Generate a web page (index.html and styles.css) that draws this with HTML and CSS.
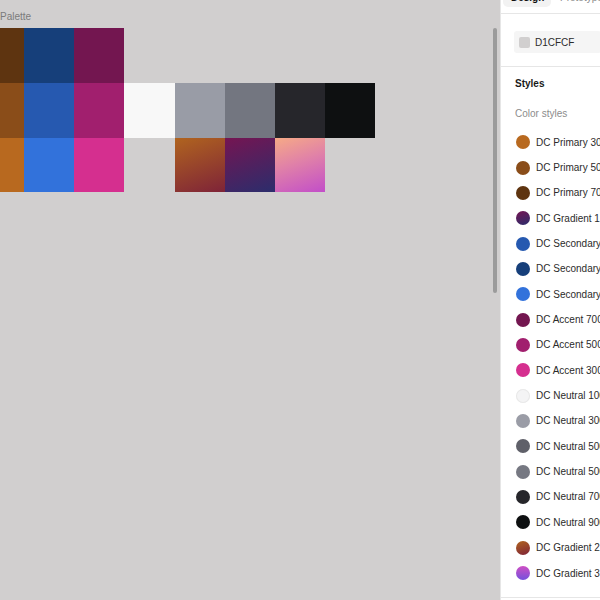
FILE: index.html
```html
<!DOCTYPE html>
<html lang="en">
<head>
  <meta charset="UTF-8">
  <title>Palette</title>
  <link rel="stylesheet" href="styles.css">
</head>
<body>
  <div class="app">
    <main class="canvas">
      <div class="frame-label">Palette</div>
      <div class="palette">
        <div class="swatch" style="background:#5e3410"></div>
        <div class="swatch" style="background:#163f7a"></div>
        <div class="swatch" style="background:#731650"></div>
        <div class="swatch empty"></div>
        <div class="swatch empty"></div>
        <div class="swatch empty"></div>
        <div class="swatch empty"></div>
        <div class="swatch empty"></div>

        <div class="swatch" style="background:#8a4d19"></div>
        <div class="swatch" style="background:#2659b0"></div>
        <div class="swatch" style="background:#a11f6e"></div>
        <div class="swatch" style="background:#f8f8f8"></div>
        <div class="swatch" style="background:#999ca6"></div>
        <div class="swatch" style="background:#737680"></div>
        <div class="swatch" style="background:#26262b"></div>
        <div class="swatch" style="background:#0e1011"></div>

        <div class="swatch" style="background:#b8691f"></div>
        <div class="swatch" style="background:#3272db"></div>
        <div class="swatch" style="background:#d52f8f"></div>
        <div class="swatch empty"></div>
        <div class="swatch grad-2"></div>
        <div class="swatch grad-1"></div>
        <div class="swatch grad-3"></div>
        <div class="swatch empty"></div>
      </div>
      <div class="scrollbar"></div>
    </main>

    <aside class="panel">
      <div class="tabs">
        <span class="tab active">Design</span>
        <span class="tab">Prototype</span>
      </div>

      <section class="section page-section">
        <div class="section-label">Page</div>
        <div class="color-input">
          <span class="color-chip"></span>
          <span>D1CFCF</span>
        </div>
      </section>

      <section class="section styles-section">
        <div class="section-title">Styles</div>
        <div class="group-label">Color styles</div>
        <ul class="style-list">
          <li><span class="dot" style="background:#b8691f"></span>DC Primary 300</li>
          <li><span class="dot" style="background:#8a4d19"></span>DC Primary 500</li>
          <li><span class="dot" style="background:#5e3410"></span>DC Primary 700</li>
          <li><span class="dot grad-1"></span>DC Gradient 1</li>
          <li><span class="dot" style="background:#2659b0"></span>DC Secondary 500</li>
          <li><span class="dot" style="background:#163f7a"></span>DC Secondary 700</li>
          <li><span class="dot" style="background:#3272db"></span>DC Secondary 300</li>
          <li><span class="dot" style="background:#731650"></span>DC Accent 700</li>
          <li><span class="dot" style="background:#a11f6e"></span>DC Accent 500</li>
          <li><span class="dot" style="background:#d52f8f"></span>DC Accent 300</li>
          <li><span class="dot light" style="background:#f4f4f5"></span>DC Neutral 100</li>
          <li><span class="dot" style="background:#9a9ca6"></span>DC Neutral 300</li>
          <li><span class="dot" style="background:#5f6069"></span>DC Neutral 500</li>
          <li><span class="dot" style="background:#767882"></span>DC Neutral 500</li>
          <li><span class="dot" style="background:#26262b"></span>DC Neutral 700</li>
          <li><span class="dot" style="background:#0e1011"></span>DC Neutral 900</li>
          <li><span class="dot grad-2"></span>DC Gradient 2</li>
          <li><span class="dot grad-4"></span>DC Gradient 3</li>
        </ul>
      </section>
    </aside>
  </div>
</body>
</html>
```

FILE: styles.css
```css
:root {
  --canvas-bg: #d1cfcf;
  --panel-border: #e6e6e6;
  --text-color: #2b2b2b;
  --muted-color: #8c8c8c;
}

body {
  margin: 0;
  font-family: "Liberation Sans", Arial, sans-serif;
  font-size: 10px;
  color: var(--text-color);
  background: var(--canvas-bg);
  overflow: hidden;
}

.app {
  display: flex;
  width: 600px;
  height: 600px;
}

/* Canvas */
.canvas {
  position: relative;
  width: 500px;
  flex-shrink: 0;
  overflow: hidden;
}

.frame-label {
  margin-top: 10px;
  line-height: 13px;
  color: #7b7b7b;
}

.palette {
  display: grid;
  grid-template-columns: repeat(3, 50px) 51px repeat(4, 50px);
  grid-template-rows: 55px 55px 54px;
  margin-top: 5px;
  margin-left: -26px;
}

.swatch.empty {
  background: transparent;
}

.grad-1 {
  background: linear-gradient(160deg, #751552 0%, #2b2d6c 100%);
}

.grad-2 {
  background: linear-gradient(160deg, #b0641f 0%, #7e2338 100%);
}

.grad-3 {
  background: linear-gradient(160deg, #f6aa86 0%, #e081a8 45%, #c24ec9 100%);
}

.grad-4 {
  background: linear-gradient(180deg, #cf4fc4 0%, #7452dc 100%);
}

.scrollbar {
  position: absolute;
  left: 493px;
  top: 28px;
  width: 4px;
  height: 265px;
  border-radius: 2px;
  background: #9b9b9b;
}

/* Right panel */
.panel {
  width: 100px;
  flex-shrink: 0;
  background: white;
  border-left: 1px solid var(--panel-border);
  overflow: hidden;
  white-space: nowrap;
}

.tabs {
  position: relative;
  z-index: 1;
  display: flex;
  align-items: flex-end;
  gap: 9px;
  height: 14px;
  padding: 0 0 6px 2px;
  box-sizing: border-box;
  background: white;
  border-bottom: 1px solid var(--panel-border);
  overflow: hidden;
}

.tab {
  flex-shrink: 0;
  height: 18px;
  line-height: 18px;
  color: var(--muted-color);
}

.tab.active {
  width: 32px;
  padding: 0 8px;
  border-radius: 5px;
  background: #f2f2f2;
  color: #111;
  font-weight: bold;
}

.section {
  border-bottom: 1px solid var(--panel-border);
}

.page-section {
  padding: 0 0 13px 13px;
}

.section-label {
  margin-top: -14px;
  line-height: 16px;
}

.color-input {
  display: flex;
  align-items: center;
  gap: 5px;
  height: 22px;
  margin-top: 15px;
  padding-left: 5px;
  border-radius: 3px;
  background: #f5f5f5;
}

.color-chip {
  width: 11px;
  height: 11px;
  border-radius: 2px;
  background: var(--canvas-bg);
}

.styles-section {
  padding: 9px 0 11px 0;
}

.section-title {
  padding-left: 14px;
  line-height: 16px;
  font-weight: bold;
  color: #1a1a1a;
}

.group-label {
  margin-top: 14px;
  padding-left: 14px;
  line-height: 16px;
  color: var(--muted-color);
}

.style-list {
  list-style: none;
  margin: 7.5px 0 0;
  padding: 0 0 0 15px;
}

.style-list li {
  display: flex;
  align-items: center;
  gap: 6px;
  height: 25.35px;
}

.dot {
  flex-shrink: 0;
  width: 14px;
  height: 14px;
  border-radius: 50%;
}

.dot.light {
  box-shadow: inset 0 0 0 1px #e8e8e8;
}
```
